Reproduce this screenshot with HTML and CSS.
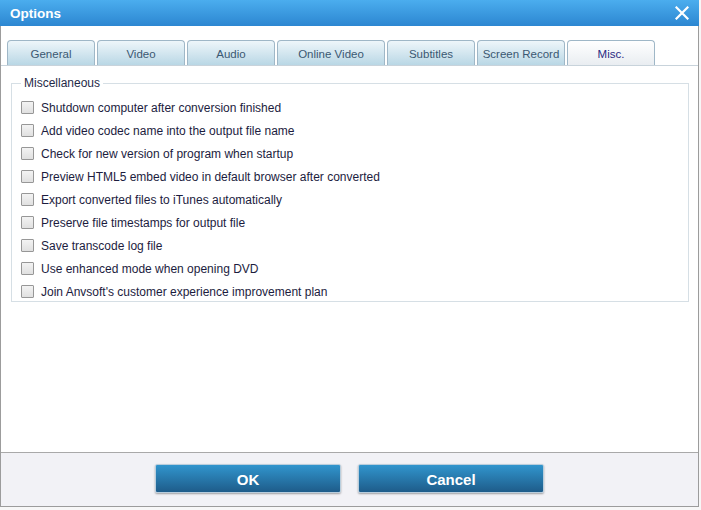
FILE: index.html
```html
<!DOCTYPE html>
<html>
<head>
<meta charset="utf-8">
<title>Options</title>
<link rel="stylesheet" href="styles.css">
</head>
<body>
<div class="window">
  <div class="titlebar">
    <span class="title">Options</span>
    <svg class="close" width="14" height="14" viewBox="0 0 14 14"><path d="M1.5 1.5 L12.5 12.5 M12.5 1.5 L1.5 12.5" stroke="#fff" stroke-width="2.2" stroke-linecap="square" fill="none"/></svg>
  </div>
  <div class="tabstrip">
    <div class="tab">General</div>
    <div class="tab">Video</div>
    <div class="tab">Audio</div>
    <div class="tab wide">Online Video</div>
    <div class="tab">Subtitles</div>
    <div class="tab">Screen Record</div>
    <div class="tab active">Misc.</div>
  </div>
  <div class="content">
    <fieldset class="group">
      <legend>Miscellaneous</legend>
      <div class="row"><span class="box"></span><span>Shutdown computer after conversion finished</span></div>
      <div class="row"><span class="box"></span><span>Add video codec name into the output file name</span></div>
      <div class="row"><span class="box"></span><span>Check for new version of program when startup</span></div>
      <div class="row"><span class="box"></span><span>Preview HTML5 embed video in default browser after converted</span></div>
      <div class="row"><span class="box"></span><span>Export converted files to iTunes automatically</span></div>
      <div class="row"><span class="box"></span><span>Preserve file timestamps for output file</span></div>
      <div class="row"><span class="box"></span><span>Save transcode log file</span></div>
      <div class="row"><span class="box"></span><span>Use enhanced mode when opening DVD</span></div>
      <div class="row"><span class="box"></span><span>Join Anvsoft's customer experience improvement plan</span></div>
    </fieldset>
  </div>
  <div class="footer">
    <button class="btn">OK</button>
    <button class="btn">Cancel</button>
  </div>
</div>
</body>
</html>
```
FILE: styles.css
```css
html, body {
  margin: 0;
  padding: 0;
}
body {
  background: #f7f7f7;
  font-family: "Liberation Sans", Arial, sans-serif;
  width: 701px;
  height: 510px;
  overflow: hidden;
}
.window {
  box-sizing: border-box;
  width: 699px;
  height: 507px;
  border: 1px solid #9c9c9c;
  border-top: none;
  background: #fff;
  display: flex;
  flex-direction: column;
}
.titlebar {
  height: 26px;
  flex: none;
  background: linear-gradient(#4badee, #2c86d1);
  display: flex;
  align-items: center;
  justify-content: space-between;
  padding: 0 10px 0 10px;
  margin: 0 -1px;
}
.title {
  color: #fff;
  font-weight: bold;
  font-size: 13.5px;
}
.close {
  display: block;
}
.tabstrip {
  flex: none;
  display: flex;
  gap: 2px;
  padding: 14px 0 0 6px;
  border-bottom: 1px solid #c8d3db;
}
.tab {
  box-sizing: border-box;
  width: 88px;
  height: 25px;
  border: 1px solid #9fb7c7;
  border-bottom: none;
  border-radius: 4px 4px 0 0;
  background: linear-gradient(#eef6fa, #b9d7e5);
  color: #3b5872;
  font-size: 11.5px;
  display: flex;
  align-items: center;
  justify-content: center;
  padding-top: 1px;
}
.tab.wide {
  width: 108px;
}
.tab.active {
  background: linear-gradient(#ffffff, #e9edf1);
  color: #2b2a82;
}
.content {
  flex: 1;
  padding: 10px 9px 0 10px;
}
.group {
  margin: 0;
  border: 1px solid #d6dfe5;
  padding: 9px 0 1px 9px;
  display: flex;
  flex-direction: column;
  gap: 6px;
}
.group legend {
  font-size: 12px;
  line-height: 14px;
  color: #1f2a48;
  padding: 0 3px;
  margin-left: 0;
}
.row {
  display: flex;
  align-items: center;
  height: 17px;
  gap: 7px;
  font-size: 12px;
  color: #1c1c3e;
}
.box {
  box-sizing: border-box;
  width: 13px;
  height: 13px;
  border: 1px solid #979797;
  border-radius: 1px;
  background: linear-gradient(#f3f3f3, #e0e0e0);
  flex: none;
}
.footer {
  flex: none;
  border-top: 1px solid #a9a9a9;
  background: #f2f2f6;
  display: flex;
  justify-content: center;
  align-items: flex-start;
  gap: 17px;
  padding-top: 11px;
  box-sizing: border-box;
  height: 54px;
}
.btn {
  box-sizing: border-box;
  width: 186px;
  height: 29px;
  border: 1px solid #b9cedd;
  border-radius: 2px;
  background: linear-gradient(#3195cd, #1e5c8a);
  box-shadow: 0 1px 2px rgba(0,0,0,0.35);
  color: #fff;
  font-family: "Liberation Sans", Arial, sans-serif;
  font-weight: bold;
  font-size: 15px;
  padding: 2px 0 0;
}
```
